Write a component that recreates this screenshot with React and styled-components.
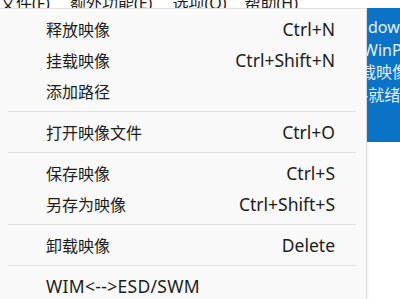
import React from 'react'
import styled, { createGlobalStyle } from 'styled-components'

const GlobalStyle = createGlobalStyle`
    html, body {
        margin: 0;
        padding: 0;
        background: #ffffff;
    }
    body {
        font-family: "Noto Sans", "Noto Sans CJK SC", sans-serif;
    }
`

const Page = styled.div`
    width: 400px;
    height: 299px;
    overflow: hidden;
    display: flex;
    flex-direction: column;
    background: #ffffff;
`

const MenuBar = styled.div`
    height: 8px;
    display: flex;
    align-items: flex-end;
    overflow: hidden;
    background: #ffffff;
    flex-shrink: 0;
`

const BarItem = styled.span`
    flex-shrink: 0;
    font-size: 16px;
    line-height: 18px;
    height: 18px;
    margin-bottom: -4px;
    margin-left: ${(p) => p.gap}px;
    color: #1a1a1a;
    white-space: nowrap;
`

const Body = styled.div`
    display: flex;
    flex: 1;
`

const Menu = styled.div`
    width: 367px;
    flex-shrink: 0;
    background: #f9f9f9;
    border-top: 1px solid #e2e2e2;
    border-right: 1px solid #dcdcdc;
    padding-top: 4px;
    box-sizing: border-box;
`

const Item = styled.div`
    height: 31px;
    display: flex;
    align-items: center;
    justify-content: space-between;
    padding: 0 31px 0 46px;
    color: #1c1c1c;
`

const Label = styled.span`
    font-size: ${(p) => (p.latin ? 17.5 : 16)}px;
    letter-spacing: ${(p) => (p.latin ? 0.3 : 0)}px;
    white-space: nowrap;
`

const Shortcut = styled.span`
    font-size: 17.5px;
    white-space: nowrap;
`

const Separator = styled.div`
    height: 10px;
    display: flex;
    align-items: center;
    padding: 0 10px 0 8px;

    &::after {
        content: '';
        flex: 1;
        height: 1px;
        background: #e1e1e1;
    }
`

const Side = styled.div`
    flex: 1;
    display: flex;
    flex-direction: column;
    background: #ffffff;
    box-shadow: inset 2px 0 3px -2px rgba(0, 0, 0, 0.12);
`

const BluePanel = styled.div`
    height: 134px;
    background: #0b73c6;
    overflow: hidden;
    padding-top: 8px;
    box-sizing: border-box;
`

const BlueLine = styled.div`
    height: 22.5px;
    line-height: 22px;
    font-size: 16px;
    color: #e6f0fa;
    white-space: nowrap;
    margin-left: ${(p) => p.shift}px;
`

const barItems = [
    { text: '文件(F)', gap: 0 },
    { text: '额外功能(E)', gap: 20 },
    { text: '选项(O)', gap: 20 },
    { text: '帮助(H)', gap: 18 },
]

const menu = [
    [
        ['释放映像', 'Ctrl+N'],
        ['挂载映像', 'Ctrl+Shift+N'],
        ['添加路径', ''],
    ],
    [['打开映像文件', 'Ctrl+O']],
    [
        ['保存映像', 'Ctrl+S'],
        ['另存为映像', 'Ctrl+Shift+S'],
    ],
    [['卸载映像', 'Delete']],
    [['WIM<-->ESD/SWM', '', true]],
]

const App = () => (
    <>
        <GlobalStyle />
        <Page>
            <MenuBar>
                {barItems.map((b) => (
                    <BarItem key={b.text} gap={b.gap}>
                        {b.text}
                    </BarItem>
                ))}
            </MenuBar>
            <Body>
                <Menu>
                    {menu.map((group, gi) => (
                        <React.Fragment key={gi}>
                            {gi > 0 && <Separator />}
                            {group.map(([label, key, latin]) => (
                                <Item key={label}>
                                    <Label latin={latin}>{label}</Label>
                                    <Shortcut>{key}</Shortcut>
                                </Item>
                            ))}
                        </React.Fragment>
                    ))}
                </Menu>
                <Side>
                    <BluePanel>
                        <BlueLine shift={1}>dows</BlueLine>
                        <BlueLine shift={-4}>WinPE</BlueLine>
                        <BlueLine shift={-7}>载映像</BlueLine>
                        <BlueLine shift={-4}>-就绪</BlueLine>
                    </BluePanel>
                </Side>
            </Body>
        </Page>
    </>
)

export default App
